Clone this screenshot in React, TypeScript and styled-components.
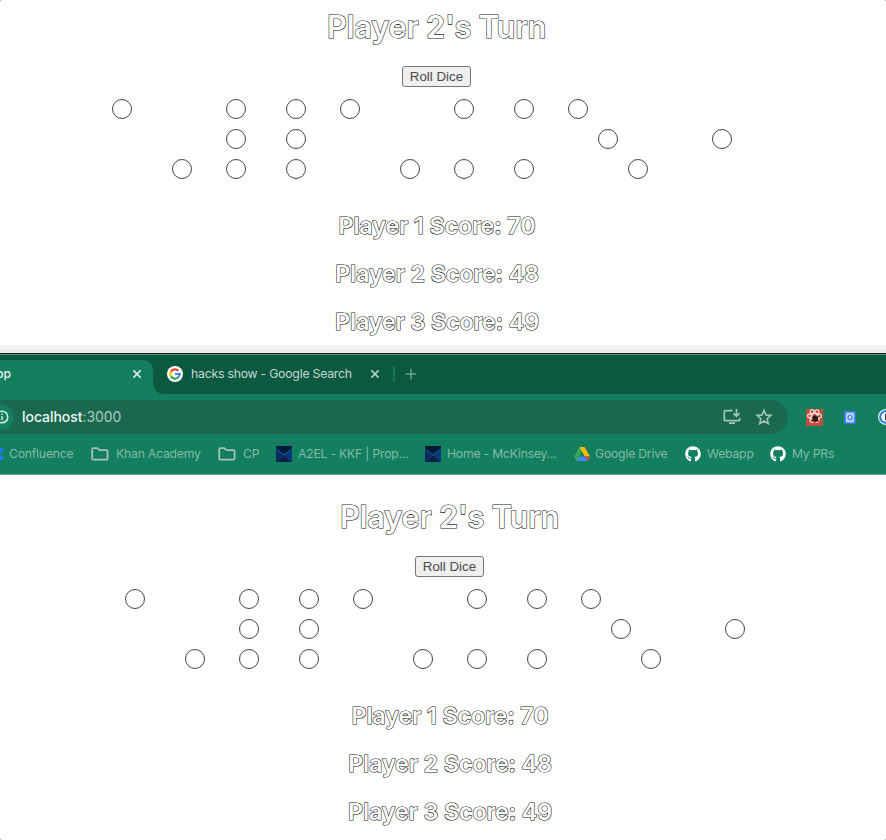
import React from 'react';
import styled, { createGlobalStyle } from 'styled-components';
import { FaGithub } from 'react-icons/fa';

const GlobalStyle = createGlobalStyle`
  * { box-sizing: border-box; }
  body { margin: 0; background: #999; font-family: Inter, "Liberation Sans", sans-serif; }
`;

const Page = styled.div`
  width: 886px;
  height: 840px;
  overflow: hidden;
  background: #fff;
  border-radius: 2px;
`;

const GamePanel = styled.main<{ $height: number; $top: number; $left?: number; $right?: number }>`
  height: ${p => p.$height}px;
  padding: ${p => p.$top}px ${p => p.$right ?? 0}px 0 ${p => p.$left ?? 0}px;
  display: flex;
  flex-direction: column;
  align-items: center;
  overflow: hidden;
  > * { flex-shrink: 0; }
`;

const Turn = styled.h1`
  margin: 0 1px 0 0;
  height: 40px;
  font: 600 30.8px/40px Inter, sans-serif;
  letter-spacing: -0.25px;
  color: #fff;
  -webkit-text-stroke: 1.1px #111;
  paint-order: stroke fill;
  white-space: nowrap;
`;

const RollButton = styled.button`
  width: 69px;
  height: 21px;
  margin: 19px 1px 7px 0;
  padding: 0;
  border: 1px solid #767676;
  border-radius: 3px;
  background: #efefef;
  color: #4a4a4a;
  font: 13.33px/17px "Liberation Sans", sans-serif;
`;

const DiceRow = styled.div`
  display: flex;
  gap: 24px;
`;

const Die = styled.div`
  display: grid;
  grid-template: repeat(3, 30px) / repeat(3, 30px);
  place-items: center;
`;

const Pip = styled.span<{ $row: number; $col: number }>`
  grid-row: ${p => p.$row};
  grid-column: ${p => p.$col};
  width: 20px;
  height: 20px;
  border: 1px solid #444;
  border-radius: 50%;
`;

const Scores = styled.div`
  margin-top: 18px;
  display: flex;
  flex-direction: column;
  align-items: center;
`;

const Score = styled.h2`
  margin: 0;
  font: 600 23.3px/48px Inter, sans-serif;
  letter-spacing: -0.12px;
  color: #fff;
  -webkit-text-stroke: 1.1px #111;
  paint-order: stroke fill;
  white-space: nowrap;
`;

const WindowGap = styled.div`
  height: 8px;
  background: #ececec;
  border-top: 4px solid #f3f3f3;
`;

const Browser = styled.header`
  height: 122px;
  border-top: 1px solid #17201d;
  border-bottom: 1px solid #5ca58e;
  background: #137f5e;
`;

const TabStrip = styled.div`
  height: 40px;
  border-top: 1px solid #5c8b7b;
  background: #137f5e;
  display: flex;
`;

const ActiveTab = styled.div`
  width: 153px;
  height: 39px;
  background: #0b5940;
  padding-top: 5px;
`;

const ActiveTabFace = styled.div`
  height: 34px;
  padding: 0 10px 6px 0;
  border-radius: 0 10px 0 0;
  background: #137f5e;
  display: flex;
  align-items: center;
  justify-content: space-between;
  color: #e6f2ee;
  font-size: 12.2px;
  font-weight: 500;
  span { margin: 0 0 2px -4px; }
`;

const RestTabs = styled.div`
  flex: 1;
  height: 39px;
  padding: 0 0 1px 14px;
  border-radius: 0 0 0 11px;
  background: #0b5940;
  display: flex;
  align-items: center;
`;

const TabTitle = styled.span`
  width: 161px;
  margin: 0 17px 2px 8px;
  color: #c2d8d1;
  font-size: 12.3px;
  letter-spacing: -0.25px;
  white-space: nowrap;
`;

const TabDivider = styled.span`
  width: 2px;
  height: 16px;
  margin: 0 10px 0 12px;
  background: #137657;
`;

const Toolbar = styled.div`
  height: 46px;
  padding-top: 6px;
  display: flex;
`;

const Address = styled.div`
  width: 788px;
  flex-shrink: 0;
  height: 34px;
  padding-right: 15px;
  border-radius: 0 17px 17px 0;
  background: #1a684f;
  display: flex;
  align-items: center;
  gap: 14px;
`;

const InfoBadge = styled.span`
  width: 14px;
  height: 26px;
  margin-right: -6px;
  border-radius: 0 13px 13px 0;
  background: #137f5e;
  display: flex;
  align-items: center;
  justify-content: flex-end;
  padding-right: 5px;
`;

const Url = styled.span`
  flex: 1;
  margin-bottom: 1px;
  color: #a9cabe;
  font-size: 14px;
  letter-spacing: -0.05px;
  b { font-weight: 500; color: #edf6f3; }
`;

const Extensions = styled.div`
  flex: 1;
  min-width: 0;
  height: 34px;
  padding-left: 18px;
  display: flex;
  align-items: center;
  overflow: hidden;
`;

const Bookmarks = styled.nav`
  height: 28px;
  display: flex;
  align-items: center;
`;

const Bookmark = styled.span<{ $width: number; $gap: number }>`
  width: ${p => p.$width}px;
  display: flex;
  flex-shrink: 0;
  align-items: center;
  gap: ${p => p.$gap}px;
  color: #83baa8;
  font-size: 12.2px;
  letter-spacing: -0.2px;
  white-space: nowrap;
`;

const BookmarkLabel = styled.span`
  margin-bottom: 2px;
`;

const Icon = styled.svg<{ $ml?: number }>`
  display: block;
  flex-shrink: 0;
  margin-left: ${p => p.$ml ?? 0}px;
`;

const DICE: [number, number][][] = [
  [[1, 1], [3, 3]],
  [[1, 1], [2, 1], [3, 1], [1, 3], [2, 3], [3, 3]],
  [[1, 1], [3, 3]],
  [[1, 1], [3, 1], [1, 3], [3, 3]],
  [[1, 1], [2, 2], [3, 3]],
  [[2, 2]],
];

function Game() {
  return (
    <>
      <Turn>Player 2's Turn</Turn>
      <RollButton>Roll Dice</RollButton>
      <DiceRow>
        {DICE.map((pips, i) => (
          <Die key={i}>
            {pips.map(([r, c]) => <Pip key={`${r}${c}`} $row={r} $col={c} />)}
          </Die>
        ))}
      </DiceRow>
      <Scores>
        <Score>Player 1 Score: 70</Score>
        <Score>Player 2 Score: 48</Score>
        <Score>Player 3 Score: 49</Score>
      </Scores>
    </>
  );
}

function Cross({ color }: { color: string }) {
  return (
    <Icon width="12" height="12" viewBox="0 0 12 12">
      <path d="M2.4 2.4l7.2 7.2M9.6 2.4L2.4 9.6" stroke={color} strokeWidth="1.7" />
    </Icon>
  );
}

function Google() {
  return (
    <Icon width="16" height="16" viewBox="0 0 16 16">
      <circle cx="8" cy="8" r="8" fill="#fff" />
      <g fill="none" strokeWidth="2.2">
        <path d="M4 5.6A4.7 4.7 0 0 1 11.4 4.7" stroke="#ea4335" />
        <path d="M4 5.6A4.7 4.7 0 0 0 4 10.4" stroke="#fbbc05" />
        <path d="M4 10.4A4.7 4.7 0 0 0 11 11.5" stroke="#34a853" />
        <path d="M8 8h4.7A4.7 4.7 0 0 1 11 11.5" stroke="#4285f4" />
      </g>
    </Icon>
  );
}

function Folder() {
  return (
    <Icon width="18" height="14" viewBox="0 0 18 14">
      <path d="M1.2 2.3q0-1.2 1.2-1.2h4l2 2h7q1.2 0 1.2 1.2v7.2q0 1.2-1.2 1.2h-13q-1.2 0-1.2-1.2z" fill="none" stroke="#a9c1b8" strokeWidth="1.8" />
    </Icon>
  );
}

function McKinsey() {
  return (
    <Icon width="16" height="16" viewBox="0 0 16 16">
      <path d="M0 0h16v16H0z" fill="#051c38" />
      <path d="M0 3l8 6-8 7z" fill="#062a5c" />
      <path d="M16 3L8 9l8 7z" fill="#07367a" />
      <path d="M0 16l8-7 8 7z" fill="#051f45" />
      <path d="M0 3l8 6 8-6" fill="none" stroke="#1769bd" strokeWidth=".9" />
      <path d="M0 16l8-7 8 7" fill="none" stroke="#104f99" strokeWidth=".6" />
    </Icon>
  );
}

function Drive() {
  return (
    <Icon width="16" height="14" viewBox="0 0 16 14">
      <path d="M5.4 0L0 9.4 2.6 14 8 4.6z" fill="#34a853" />
      <path d="M5.4 0h5.2L16 9.4h-5.2z" fill="#fbbc04" />
      <path d="M5.2 9.4H16L13.4 14H2.6z" fill="#4285f4" />
      <path d="M11 9.4h5L13.4 14z" fill="#ea4335" />
    </Icon>
  );
}

export default function App() {
  return (
    <>
      <GlobalStyle />
      <Page>
        <GamePanel $height={345} $top={7} $right={12}><Game /></GamePanel>
        <WindowGap />
        <Browser>
          <TabStrip>
            <ActiveTab>
              <ActiveTabFace><span>pp</span><Cross color="#d9ebe4" /></ActiveTabFace>
            </ActiveTab>
            <RestTabs>
              <Google />
              <TabTitle>hacks show - Google Search</TabTitle>
              <Cross color="#b5d0c6" />
              <TabDivider />
              <Icon width="12" height="12" viewBox="0 0 12 12">
                <path d="M6 .8v10.4M.8 6h10.4" stroke="#6b9c8c" strokeWidth="1.6" />
              </Icon>
            </RestTabs>
          </TabStrip>
          <Toolbar>
            <Address>
              <InfoBadge>
                <Icon width="14" height="14" viewBox="0 0 14 14">
                  <circle cx="7" cy="7" r="5.8" fill="none" stroke="#d4e8e0" strokeWidth="1.5" />
                  <path d="M7 6.2v4M7 3.5v1.5" stroke="#d4e8e0" strokeWidth="1.5" />
                </Icon>
              </InfoBadge>
              <Url><b>localhost</b>:3000</Url>
              <Icon width="18" height="16" viewBox="0 0 18 16">
                <path d="M9.5 1.7H2.3q-1 0-1 1v8q0 1 1 1h13.4q1 0 1-1V9M6 14.2h6" fill="none" stroke="#a5c2b8" strokeWidth="1.7" />
                <path d="M13.5 0v7M10.5 4.4l3 3 3-3" fill="none" stroke="#a5c2b8" strokeWidth="1.7" />
              </Icon>
              <Icon width="18" height="18" viewBox="0 0 24 24">
                <path d="M12 3l2.6 6.2 6.7.6-5.1 4.4 1.5 6.6-5.7-3.5-5.7 3.5 1.5-6.6-5.1-4.4 6.7-.6z" fill="none" stroke="#a5c2b8" strokeWidth="2.1" />
              </Icon>
            </Address>
            <Extensions>
              <Icon width="17" height="17" viewBox="0 0 17 17">
                <path d="M0 0h17v17H0z" fill="#c34c3d" />
                <g fill="none" stroke="#f6dfda" strokeWidth="1.2">
                  <ellipse cx="8.5" cy="7" rx="7" ry="2.7" />
                  <ellipse cx="8.5" cy="7" rx="7" ry="2.7" transform="rotate(60 8.5 7)" />
                  <ellipse cx="8.5" cy="7" rx="7" ry="2.7" transform="rotate(120 8.5 7)" />
                </g>
                <ellipse cx="9.3" cy="9.8" rx="2.8" ry="3.3" fill="#341713" />
                <path d="M6 8l7 4.5M6 12.5l7-5" stroke="#341713" />
              </Icon>
              <Icon $ml={21} width="12" height="13" viewBox="0 0 12 13">
                <rect width="12" height="13" rx="1" fill="#327be4" />
                <rect x="1.8" y="1.4" width="8.4" height="10.2" rx="1" fill="#b5d1fb" />
                <circle cx="6" cy="6.5" r="2" fill="#d8e8ff" stroke="#3979dd" strokeWidth="1.2" />
              </Icon>
              <Icon $ml={22} width="16" height="16" viewBox="0 0 16 16">
                <circle cx="8" cy="8" r="8" fill="#d9eaf9" />
                <circle cx="8" cy="8" r="5.8" fill="#fff" stroke="#287bd5" strokeWidth="2" />
                <path d="M8 5v6" stroke="#183b57" strokeWidth="2" />
              </Icon>
            </Extensions>
          </Toolbar>
          <Bookmarks>
            <Bookmark $width={91} $gap={5}>
              <Icon width="4" height="14" viewBox="0 0 4 14">
                <path d="M0 1h4L2 6H0zM0 8l3 1 1 4H0z" fill="#247be7" />
              </Icon>
              <BookmarkLabel>Confluence</BookmarkLabel>
            </Bookmark>
            <Bookmark $width={127} $gap={7}><Folder /><BookmarkLabel>Khan Academy</BookmarkLabel></Bookmark>
            <Bookmark $width={58} $gap={7}><Folder /><BookmarkLabel>CP</BookmarkLabel></Bookmark>
            <Bookmark $width={149} $gap={6}><McKinsey /><BookmarkLabel>A2EL - KKF | Prop...</BookmarkLabel></Bookmark>
            <Bookmark $width={149} $gap={6}><McKinsey /><BookmarkLabel>Home - McKinsey...</BookmarkLabel></Bookmark>
            <Bookmark $width={111} $gap={5}><Drive /><BookmarkLabel>Google Drive</BookmarkLabel></Bookmark>
            <Bookmark $width={85} $gap={6}><FaGithub size={16} color="#fff" /><BookmarkLabel>Webapp</BookmarkLabel></Bookmark>
            <Bookmark $width={80} $gap={6}><FaGithub size={16} color="#fff" /><BookmarkLabel>My PRs</BookmarkLabel></Bookmark>
          </Bookmarks>
        </Browser>
        <GamePanel $height={365} $top={22} $left={14}><Game /></GamePanel>
      </Page>
    </>
  );
}
